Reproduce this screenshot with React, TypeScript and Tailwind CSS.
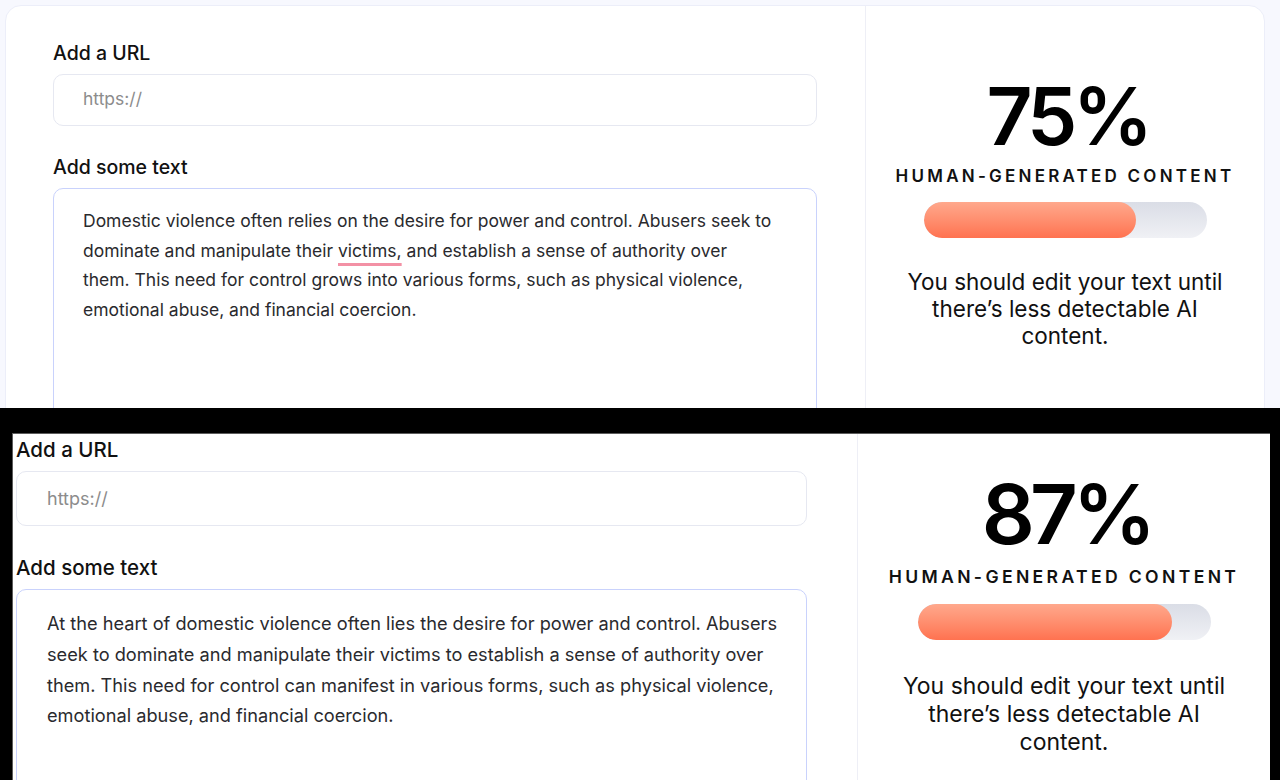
import React from "react";

type Look = {
  label: string;
  input: string;
  gap: string;
  placeholder: string;
  area: string;
  body: string;
  pct: string;
  human: string;
  bar: string;
  note: string;
};

const small: Look = {
  label: "text-[19.5px] leading-none font-medium",
  input: "mt-[10px] h-[52px] w-[764px] pl-[29px] rounded-[10px]",
  gap: "mt-[32px]",
  placeholder: "text-[17.5px]",
  area: "mt-[11px] h-[260px] w-[764px] pl-[29px] pt-[17px] rounded-[10px]",
  body: "text-[17.5px] leading-[29.7px]",
  pct: "mt-[70px] text-[80px] tracking-[-0.06em]",
  human: "mt-[12px] text-[17px] tracking-[0.19em]",
  bar: "mt-[17px] h-[36px] w-[283px]",
  note: "mt-[30px] text-[22.5px] leading-[27px]",
};

const large: Look = {
  label: "text-[20.5px] leading-none font-medium",
  input: "mt-[10px] h-[55px] w-[791px] pl-[30px] rounded-[10px]",
  gap: "mt-[32px]",
  placeholder: "text-[18px]",
  area: "mt-[11px] h-[260px] w-[791px] pl-[30px] pt-[18px] rounded-[10px]",
  body: "text-[18.2px] leading-[30.8px]",
  pct: "mt-[39px] text-[83px] tracking-[-0.06em]",
  human: "mt-[12px] text-[17.6px] tracking-[0.19em]",
  bar: "mt-[18px] h-[36px] w-[293px]",
  note: "mt-[32px] text-[23px] leading-[28px]",
};

function Detector({
  look,
  lines,
  percent,
  pad,
}: {
  look: Look;
  lines: React.ReactNode[];
  percent: number;
  pad: string;
}) {
  return (
    <div className="flex h-full">
      <div className={`shrink-0 border-r border-[#eeeff6] ${pad}`}>
        <div className={`text-[#111] ${look.label}`}>Add a URL</div>
        <div
          className={`flex items-center border border-[#e6e8f1] bg-white ${look.input}`}
        >
          <span className={`text-[#8c8c8c] ${look.placeholder}`}>https://</span>
        </div>
        <div className={`text-[#111] ${look.gap} ${look.label}`}>Add some text</div>
        <div className={`border border-[#c9d2fc] bg-white ${look.area}`}>
          {lines.map((l, i) => (
            <div key={i} className={`whitespace-nowrap text-[#2a2a2e] ${look.body}`}>
              {l}
            </div>
          ))}
        </div>
      </div>

      <div className="flex flex-1 flex-col items-center">
        <div className={`pl-[0.06em] font-semibold leading-none text-black ${look.pct}`}>
          {percent}%
        </div>
        <div className={`font-semibold uppercase leading-none text-[#111] ${look.human}`}>
          Human-Generated Content
        </div>
        <div
          className={`overflow-hidden rounded-full bg-gradient-to-b from-[#dadde6] to-[#f0f1f5] ${look.bar}`}
        >
          <div
            className="h-full rounded-full bg-gradient-to-b from-[#ffa88c] to-[#ff7250]"
            style={{ width: `${percent}%` }}
          />
        </div>
        <div className={`text-center text-[#111] ${look.note}`}>
          You should edit your text until
          <br />
          there’s less detectable AI
          <br />
          content.
        </div>
      </div>
    </div>
  );
}

export default function App() {
  return (
    <div className="h-[780px] w-[1280px] overflow-hidden font-['Inter',sans-serif]">
      <section className="h-[408px] overflow-hidden bg-[#f7f8fe] pl-[5px] pt-[5px]">
        <div className="h-[420px] w-[1260px] rounded-2xl border border-[#eceef9] bg-white">
          <Detector
            look={small}
            percent={75}
            pad="w-[860px] pl-[47px] pt-[38px]"
            lines={[
              "Domestic violence often relies on the desire for power and control. Abusers seek to",
              <>
                dominate and manipulate their{" "}
                <span className="underline decoration-[#f391a5] decoration-[2.5px] underline-offset-[6px]">
                  victims,
                </span>{" "}
                and establish a sense of authority over
              </>,
              "them. This need for control grows into various forms, such as physical violence,",
              "emotional abuse, and financial coercion.",
            ]}
          />
        </div>
      </section>

      <section className="h-[372px] overflow-hidden bg-black pl-[12px] pr-[10px] pt-[25px]">
        <div className="h-[360px] border-l border-t border-[#5c5c5c] bg-white">
          <Detector
            look={large}
            percent={87}
            pad="w-[845px] pl-[3px] pt-[6px]"
            lines={[
              "At the heart of domestic violence often lies the desire for power and control. Abusers",
              "seek to dominate and manipulate their victims to establish a sense of authority over",
              "them. This need for control can manifest in various forms, such as physical violence,",
              "emotional abuse, and financial coercion.",
            ]}
          />
        </div>
      </section>
    </div>
  );
}
